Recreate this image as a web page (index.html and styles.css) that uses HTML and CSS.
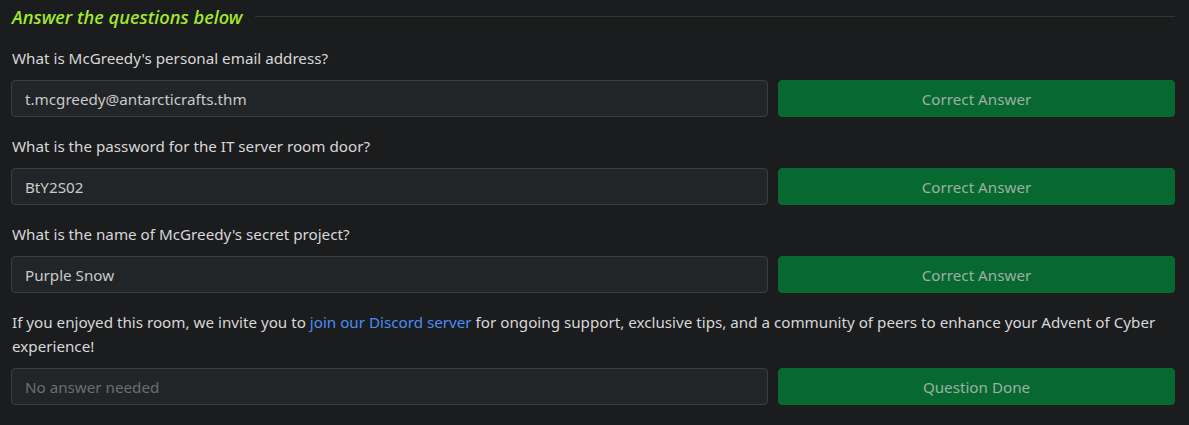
FILE: index.html
```html
<!DOCTYPE html>
<html lang="en">
<head>
<meta charset="utf-8">
<title>Answer the questions below</title>
<link rel="stylesheet" href="styles.css">
</head>
<body>
<section class="panel">
  <div class="panel-head">
    <h2 class="panel-title">Answer the questions below</h2>
    <span class="panel-rule"></span>
  </div>

  <div class="question">
    <p class="q-text">What is McGreedy's personal email address?</p>
    <div class="q-row">
      <div class="q-input">t.mcgreedy@antarcticrafts.thm</div>
      <button class="q-btn">Correct Answer</button>
    </div>
  </div>

  <div class="question">
    <p class="q-text">What is the password for the IT server room door?</p>
    <div class="q-row">
      <div class="q-input">BtY2S02</div>
      <button class="q-btn">Correct Answer</button>
    </div>
  </div>

  <div class="question">
    <p class="q-text">What is the name of McGreedy's secret project?</p>
    <div class="q-row">
      <div class="q-input">Purple Snow</div>
      <button class="q-btn">Correct Answer</button>
    </div>
  </div>

  <div class="question">
    <p class="q-text">If you enjoyed this room, we invite you to <a class="link" href="#">join our Discord server</a> for ongoing support, exclusive tips, and a community of peers to enhance your Advent of Cyber experience!</p>
    <div class="q-row">
      <div class="q-input placeholder">No answer needed</div>
      <button class="q-btn">Question Done</button>
    </div>
  </div>
</section>
</body>
</html>
```

FILE: styles.css
```css
html, body {
  margin: 0;
  padding: 0;
  background: #1b1c1e;
}

body {
  font-family: "Noto Sans", "Open Sans", sans-serif;
  font-size: 15.2px;
  color: #d8d8d8;
}

.panel {
  padding: 0 14px 0 11px;
}

.panel-head {
  display: flex;
  align-items: center;
  height: 32px;
  margin-bottom: 14px;
}

.panel-title {
  margin: 0;
  font-size: 18.4px;
  font-style: italic;
  font-weight: 500;
  color: #a5ec2b;
  white-space: nowrap;
  padding-left: 1px;
}

.panel-rule {
  flex: 1;
  height: 1px;
  background: #34372f;
  margin-left: 13px;
}

.question {
  margin-bottom: 17px;
}

.q-text {
  margin: 0 0 10px;
  line-height: 24px;
  padding-left: 1px;
}

.link {
  color: #4a8ef5;
  text-decoration: none;
}

.q-row {
  display: grid;
  grid-template-columns: minmax(0, 757fr) minmax(0, 397fr);
  column-gap: 10px;
}

.q-input {
  height: 37px;
  box-sizing: border-box;
  border: 1px solid #3a3e42;
  border-radius: 4px;
  background: #222527;
  color: #cacaca;
  padding: 0 13px;
  display: flex;
  align-items: center;
}

.q-input.placeholder {
  color: #6b6e70;
}

.q-btn {
  height: 37px;
  box-sizing: border-box;
  border: 1px solid #0a6a2f;
  border-radius: 4px;
  background: #086930;
  color: #9db0a2;
  font-family: inherit;
  font-size: 15.2px;
  padding: 0;
}
```
